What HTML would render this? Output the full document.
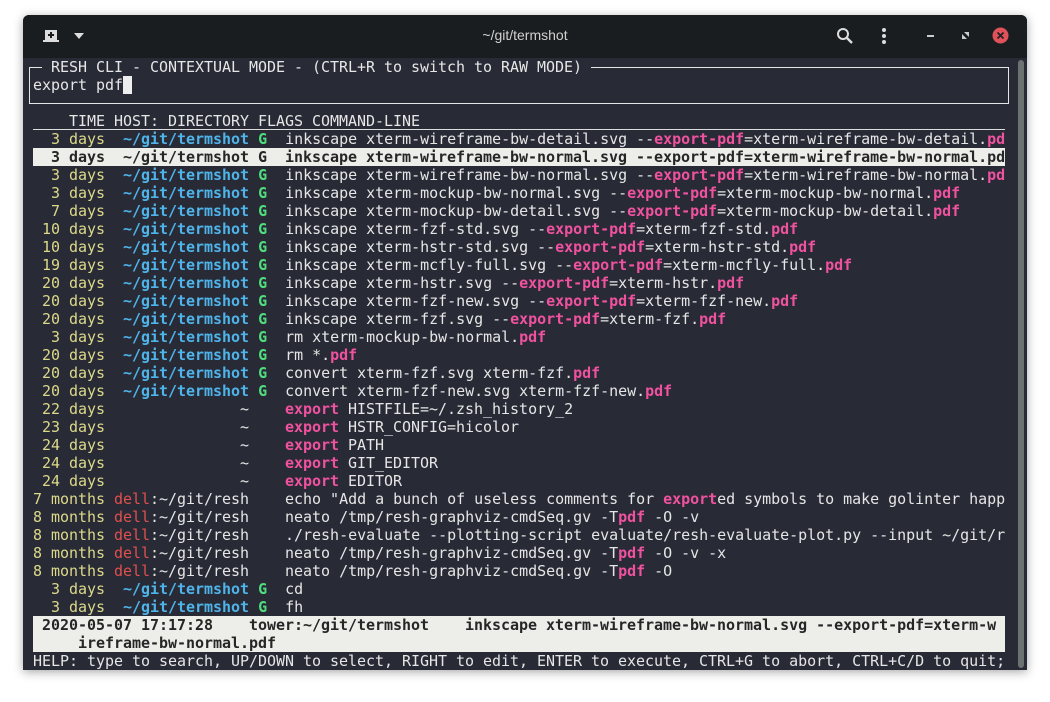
<!DOCTYPE html>
<html><head><meta charset="utf-8"><style>
html,body{margin:0;padding:0;background:#fff;width:1050px;height:702px;overflow:hidden}
.win{position:absolute;left:23px;top:15px;width:1004px;height:655px;background:#282a36;border-radius:6px 6px 0 0;box-shadow:0 2px 10px rgba(0,0,0,.35);overflow:hidden}
.tb{position:absolute;left:0;top:0;width:1004px;height:43px;background:#1a1d20}
.title{position:absolute;left:0;right:0;top:12px;text-align:center;color:#d0d0d0;font:14px "Liberation Sans",sans-serif}
.term{position:absolute;left:10px;top:43px;font-family:"DejaVu Sans Mono","Liberation Mono",monospace;font-size:15px;letter-spacing:-0.03px;color:#e6e6e6}
.l{height:18px;line-height:18px;white-space:pre;width:972px;overflow:hidden}
.y{color:#dcd98a}.b{color:#4fb4ea;font-weight:bold}.g{color:#4fdc7c;font-weight:bold}.p{color:#f0529f;font-weight:bold}.r{color:#e0504f}
.hl{background:#ededea;color:#262626;font-weight:bold}
.box{position:absolute;left:6px;top:52px;width:978px;height:35px;border:1.5px solid #e6e6e6}
.sb{position:absolute;left:995px;top:45px;width:6px;height:608px;background:#6b7270;border-radius:3px}
</style></head><body>
<div class="win">
<div class="tb">
<svg style="position:absolute;left:20px;top:14px" width="16" height="14" viewBox="0 0 16 14"><path d="M2 1h12v10h2v2H0v-2h2z" fill="#ddd"/><path d="M8 3v6M5 6h6" stroke="#1a1d20" stroke-width="2"/></svg>
<svg style="position:absolute;left:51px;top:18px" width="10" height="6"><path d="M0 0h10L5 6z" fill="#ddd"/></svg>
<div class="title">~/git/termshot</div>
<svg style="position:absolute;left:813px;top:12px" width="18" height="18"><circle cx="7" cy="7" r="5" stroke="#ddd" stroke-width="2" fill="none"/><path d="M11 11l5 5" stroke="#ddd" stroke-width="2.4"/></svg>
<svg style="position:absolute;left:858px;top:12px" width="6" height="18"><circle cx="3" cy="3" r="2" fill="#ddd"/><circle cx="3" cy="9" r="2" fill="#ddd"/><circle cx="3" cy="15" r="2" fill="#ddd"/></svg>
<div style="position:absolute;left:904px;top:20px;width:7px;height:2px;background:#ccc"></div>
<svg style="position:absolute;left:939px;top:17px" width="7" height="7"><path d="M0 7V2L5 7zM7 0v5L2 0z" fill="#ccc"/></svg>
<svg style="position:absolute;left:969px;top:12px" width="17" height="17"><circle cx="8.5" cy="8.5" r="8" fill="#e0525a"/><path d="M5.5 5.5l6 6M11.5 5.5l-6 6" stroke="#222" stroke-width="1.8"/></svg>
</div>
<div class="box"></div>
<div class="sb"></div>
<div class="term">
<div class="l"><span style="background:#282a36;color:#e6e6e6;margin-left:9px"> RESH CLI - CONTEXTUAL MODE - (CTRL+R to switch to RAW MODE) </span></div>
<div class="l">export pdf<span style="background:#eee;display:inline-block;width:9px;height:18px;vertical-align:top"></span></div>
<div class="l"> </div>
<div class="l" style="height:17px;border-bottom:1px solid #ddd;width:972px">    TIME HOST: DIRECTORY FLAGS COMMAND-LINE</div>
<div class="l"><span class="y">  3 days</span>  <span class="b">~/git/termshot</span> <span class="g">G</span>  inkscape xterm-wireframe-bw-detail.svg --<span class="p">export-pdf</span>=xterm-wireframe-bw-detail.<span class="p">pd</span></div>
<div class="l hl">  3 days  ~/git/termshot G  inkscape xterm-wireframe-bw-normal.svg --export-pdf=xterm-wireframe-bw-normal.pd</div>
<div class="l"><span class="y">  3 days</span>  <span class="b">~/git/termshot</span> <span class="g">G</span>  inkscape xterm-wireframe-bw-normal.svg --<span class="p">export-pdf</span>=xterm-wireframe-bw-normal.<span class="p">pdf</span></div>
<div class="l"><span class="y">  3 days</span>  <span class="b">~/git/termshot</span> <span class="g">G</span>  inkscape xterm-mockup-bw-normal.svg --<span class="p">export-pdf</span>=xterm-mockup-bw-normal.<span class="p">pdf</span></div>
<div class="l"><span class="y">  7 days</span>  <span class="b">~/git/termshot</span> <span class="g">G</span>  inkscape xterm-mockup-bw-detail.svg --<span class="p">export-pdf</span>=xterm-mockup-bw-detail.<span class="p">pdf</span></div>
<div class="l"><span class="y"> 10 days</span>  <span class="b">~/git/termshot</span> <span class="g">G</span>  inkscape xterm-fzf-std.svg --<span class="p">export-pdf</span>=xterm-fzf-std.<span class="p">pdf</span></div>
<div class="l"><span class="y"> 10 days</span>  <span class="b">~/git/termshot</span> <span class="g">G</span>  inkscape xterm-hstr-std.svg --<span class="p">export-pdf</span>=xterm-hstr-std.<span class="p">pdf</span></div>
<div class="l"><span class="y"> 19 days</span>  <span class="b">~/git/termshot</span> <span class="g">G</span>  inkscape xterm-mcfly-full.svg --<span class="p">export-pdf</span>=xterm-mcfly-full.<span class="p">pdf</span></div>
<div class="l"><span class="y"> 20 days</span>  <span class="b">~/git/termshot</span> <span class="g">G</span>  inkscape xterm-hstr.svg --<span class="p">export-pdf</span>=xterm-hstr.<span class="p">pdf</span></div>
<div class="l"><span class="y"> 20 days</span>  <span class="b">~/git/termshot</span> <span class="g">G</span>  inkscape xterm-fzf-new.svg --<span class="p">export-pdf</span>=xterm-fzf-new.<span class="p">pdf</span></div>
<div class="l"><span class="y"> 20 days</span>  <span class="b">~/git/termshot</span> <span class="g">G</span>  inkscape xterm-fzf.svg --<span class="p">export-pdf</span>=xterm-fzf.<span class="p">pdf</span></div>
<div class="l"><span class="y">  3 days</span>  <span class="b">~/git/termshot</span> <span class="g">G</span>  rm xterm-mockup-bw-normal.<span class="p">pdf</span></div>
<div class="l"><span class="y"> 20 days</span>  <span class="b">~/git/termshot</span> <span class="g">G</span>  rm *.<span class="p">pdf</span></div>
<div class="l"><span class="y"> 20 days</span>  <span class="b">~/git/termshot</span> <span class="g">G</span>  convert xterm-fzf.svg xterm-fzf.<span class="p">pdf</span></div>
<div class="l"><span class="y"> 20 days</span>  <span class="b">~/git/termshot</span> <span class="g">G</span>  convert xterm-fzf-new.svg xterm-fzf-new.<span class="p">pdf</span></div>
<div class="l"><span class="y"> 22 days</span>               ~    <span class="p">export</span> HISTFILE=~/.zsh_history_2</div>
<div class="l"><span class="y"> 23 days</span>               ~    <span class="p">export</span> HSTR_CONFIG=hicolor</div>
<div class="l"><span class="y"> 24 days</span>               ~    <span class="p">export</span> PATH</div>
<div class="l"><span class="y"> 24 days</span>               ~    <span class="p">export</span> GIT_EDITOR</div>
<div class="l"><span class="y"> 24 days</span>               ~    <span class="p">export</span> EDITOR</div>
<div class="l"><span class="y">7 months</span> <span class="r">dell</span>:~/git/resh    echo "Add a bunch of useless comments for <span class="p">export</span>ed symbols to make golinter happ</div>
<div class="l"><span class="y">8 months</span> <span class="r">dell</span>:~/git/resh    neato /tmp/resh-graphviz-cmdSeq.gv -T<span class="p">pdf</span> -O -v</div>
<div class="l"><span class="y">8 months</span> <span class="r">dell</span>:~/git/resh    ./resh-evaluate --plotting-script evaluate/resh-evaluate-plot.py --input ~/git/r</div>
<div class="l"><span class="y">8 months</span> <span class="r">dell</span>:~/git/resh    neato /tmp/resh-graphviz-cmdSeq.gv -T<span class="p">pdf</span> -O -v -x</div>
<div class="l"><span class="y">8 months</span> <span class="r">dell</span>:~/git/resh    neato /tmp/resh-graphviz-cmdSeq.gv -T<span class="p">pdf</span> -O</div>
<div class="l"><span class="y">  3 days</span>  <span class="b">~/git/termshot</span> <span class="g">G</span>  cd</div>
<div class="l"><span class="y">  3 days</span>  <span class="b">~/git/termshot</span> <span class="g">G</span>  fh</div>
<div class="l hl"> 2020-05-07 17:17:28    tower:~/git/termshot    inkscape xterm-wireframe-bw-normal.svg --export-pdf=xterm-w</div>
<div class="l hl">     ireframe-bw-normal.pdf</div>
<div class="l">HELP: type to search, UP/DOWN to select, RIGHT to edit, ENTER to execute, CTRL+G to abort, CTRL+C/D to quit;</div>
</div>
</div>
</body></html>
